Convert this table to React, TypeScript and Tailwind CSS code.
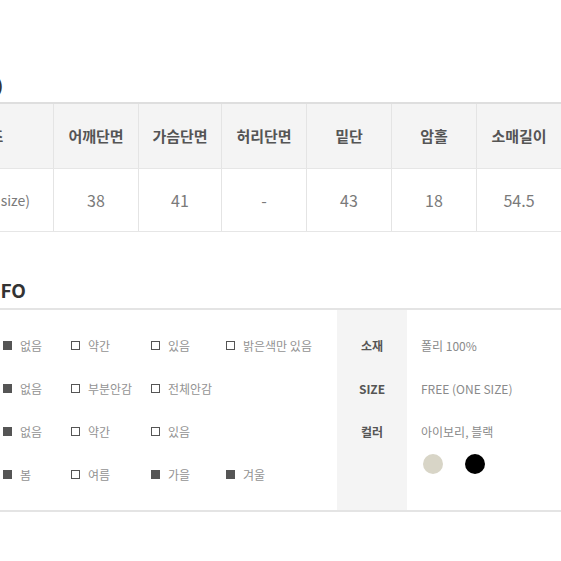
import React from "react";

const font = { fontFamily: '"Noto Sans CJK KR", "Noto Sans", sans-serif' };

const headers = ["사이즈", "어깨단면", "가슴단면", "허리단면", "밑단", "암홀", "소매길이"];
const values = ["FREE(one size)", "38", "41", "-", "43", "18", "54.5"];

const infoRows = [
  { label: "비침", items: [["없음", true], ["약간", false], ["있음", false], ["밝은색만 있음", false]] },
  { label: "안감", items: [["없음", true], ["부분안감", false], ["전체안감", false]] },
  { label: "신축성", items: [["없음", true], ["약간", false], ["있음", false]] },
  { label: "계절감", items: [["봄", true], ["여름", false], ["가을", true], ["겨울", true]] },
] as const;

function Check({ on, text }: { on: boolean; text: string }) {
  return (
    <div className="flex items-center gap-2">
      {on ? (
        <span className="w-[9px] h-[9px] bg-[#555555] shrink-0" />
      ) : (
        <span className="w-[9px] h-[9px] border-[1.5px] border-[#555555] bg-white shrink-0" />
      )}
      <span className="text-[12px] text-[#939393] whitespace-nowrap">{text}</span>
    </div>
  );
}

export default function App() {
  return (
    <div className="w-[561px] h-[561px] bg-white overflow-hidden" style={font}>
      {/* Size title */}
      <div className="pt-[74px] h-[102px]">
        <div className="w-[3px] flex justify-end">
          <span className="text-[16px] font-bold text-[#333] whitespace-nowrap leading-[22px]">SIZE (cm)</span>
        </div>
      </div>

      {/* Size table */}
      <div className="ml-[-88px] w-[670px] border-t-2 border-[#dedede] border-b border-b-[#e6e6e6]">
        <div className="grid grid-cols-[142px_85px_83px_85px_85px_85px_85px] bg-[#f4f4f4] border-b border-[#e6e6e6]">
          {headers.map((h) => (
            <div key={h} className="h-[64px] flex items-center justify-center border-r border-[#e4e4e4] text-[15px] font-bold text-[#555] whitespace-nowrap">
              {h}
            </div>
          ))}
        </div>
        <div className="grid grid-cols-[142px_85px_83px_85px_85px_85px_85px]">
          {values.map((v, i) => (
            <div
              key={i}
              className={
                i === 0
                  ? "h-[62px] flex items-center justify-center border-r border-[#e4e4e4] text-[14px] text-[#7a7a7a] whitespace-nowrap"
                  : "h-[62px] flex items-center justify-center border-r border-[#e4e4e4] text-[16px] text-[#7a7a7a]"
              }
            >
              {v}
            </div>
          ))}
        </div>
      </div>

      {/* Info title */}
      <div className="pt-[46px] h-[76px]">
        <div className="w-[26px] flex justify-end">
          <span className="text-[19px] font-bold text-[#333] whitespace-nowrap leading-[24px]">PRODUCT INFO</span>
        </div>
      </div>

      {/* Info box */}
      <div className="ml-[-88px] w-[670px] h-[204px] border-t-2 border-b-2 border-[#e4e4e4] flex">
        <div className="w-[425px] pt-[14px]">
          {infoRows.map((row) => (
            <div key={row.label} className="h-[43px] flex items-center">
              <div className="w-[91px] text-center text-[12px] font-bold text-[#555]">{row.label}</div>
              <div className="grid grid-cols-[68px_80px_75px_auto]">
                {row.items.map(([t, on], i) => (
                  <Check key={i} on={on} text={t} />
                ))}
              </div>
            </div>
          ))}
        </div>

        <div className="w-[70px] bg-[#f4f4f4] pt-[14px]">
          {["소재", "SIZE", "컬러"].map((l) => (
            <div key={l} className="h-[43px] flex items-center justify-center text-[12px] font-bold text-[#555]">
              {l}
            </div>
          ))}
        </div>

        <div className="flex-1 pt-[14px] pl-[14px]">
          <div className="h-[43px] flex items-center text-[12px] text-[#8a8a8a]">폴리 100%</div>
          <div className="h-[43px] flex items-center text-[12px] text-[#8a8a8a]">FREE (ONE SIZE)</div>
          <div className="h-[43px] flex items-center text-[12px] text-[#8a8a8a]">아이보리, 블랙</div>
          <div className="flex gap-[22px] pl-[2px] mt-[1px]">
            <span className="w-5 h-5 rounded-full bg-[#d8d5c7]" />
            <span className="w-5 h-5 rounded-full bg-black" />
          </div>
        </div>
      </div>
    </div>
  );
}
